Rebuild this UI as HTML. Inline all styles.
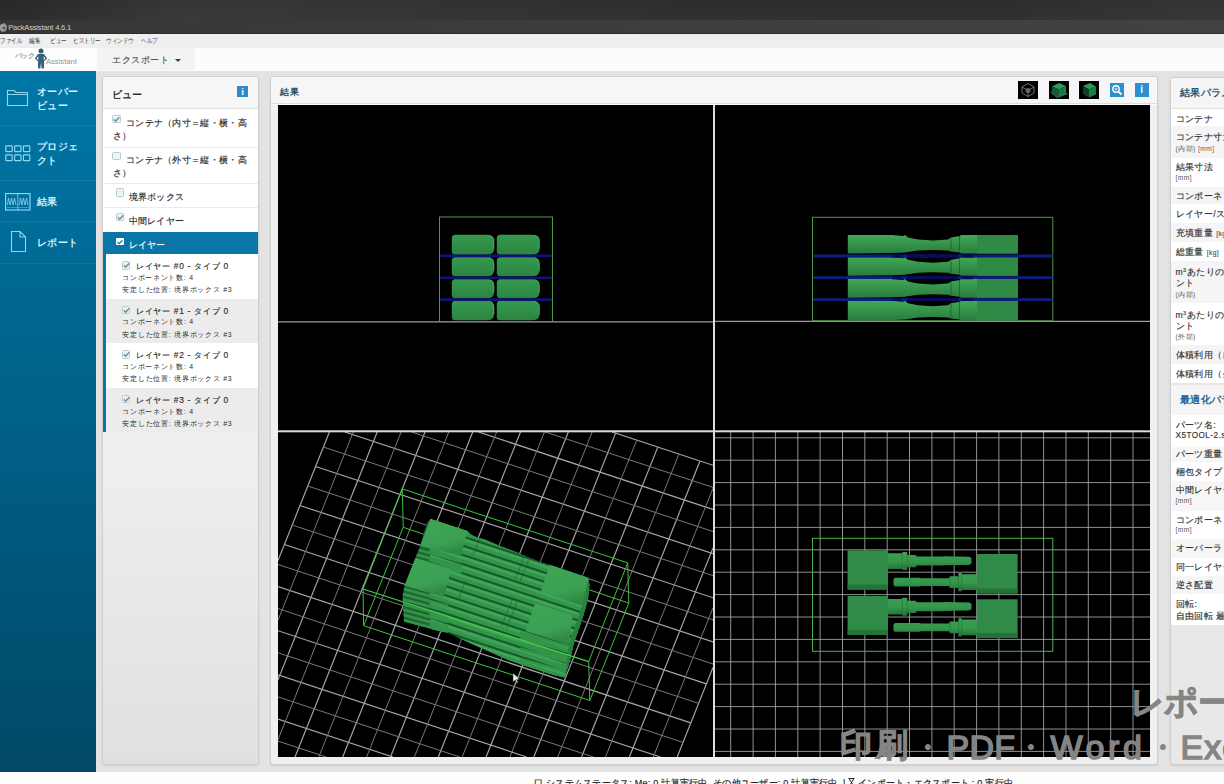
<!DOCTYPE html>
<html><head><meta charset="utf-8"><style>
*{box-sizing:border-box;margin:0;padding:0}
html,body{width:1224px;height:784px;overflow:hidden;background:#e3e3e3;font-family:"Liberation Sans",sans-serif;position:relative}
.a{position:absolute;white-space:nowrap}
.k{-webkit-text-stroke:0.15px currentColor}
.panel{position:absolute;border:1px solid #cfcfcf;border-radius:3px;box-shadow:0 1px 2px rgba(0,0,0,0.10)}
</style></head><body>
<div class="a" style="left:0px;top:0px;width:1224px;height:20px;background:linear-gradient(90deg,#2b2b2b 0%,#393a3a 15%,#363636 35%,#303030 60%,#303030 80%,#383838 100%);"></div>
<div class="a" style="left:0px;top:0px;width:1224px;height:20px;background:linear-gradient(rgba(0,0,0,.08),rgba(0,0,0,0));"></div>
<div class="a" style="left:0px;top:20px;width:1224px;height:14px;background:linear-gradient(90deg,#353636,#3c3d3c 50%,#414342);"></div>
<div class="a" style="left:0px;top:32.5px;width:1224px;height:1.5px;background:#2c2c2c;"></div>
<svg class="a" style="left:0;top:22px" width="8" height="11" viewBox="0 0 8 11"><path d="M0,3 L4,1 L7,4 L6,9 L2,10 L0,8 Z" fill="#bdbdbd" opacity=".75"/><path d="M2,6 L5,4 L5,8 Z" fill="#555"/></svg>
<div class="a" style="left:8.2px;top:23.34px;font-size:7.6px;line-height:9.12px;color:#d0d0d0;font-weight:normal;letter-spacing:-0.2px;">PackAssistant 4.6.1</div>
<div class="a" style="left:0px;top:34px;width:1224px;height:14px;background:#efefef;"></div>
<div class="a" style="left:0px;top:36.72px;font-size:6.8px;line-height:8.16px;color:#3a3a3a;font-weight:normal;letter-spacing:0px;transform:scaleX(.8);transform-origin:0 0">ファイル</div>
<div class="a" style="left:29px;top:36.72px;font-size:6.8px;line-height:8.16px;color:#3a3a3a;font-weight:normal;letter-spacing:0px;transform:scaleX(.8);transform-origin:0 0">編集</div>
<div class="a" style="left:50px;top:36.72px;font-size:6.8px;line-height:8.16px;color:#3a3a3a;font-weight:normal;letter-spacing:0px;transform:scaleX(.8);transform-origin:0 0">ビュー</div>
<div class="a" style="left:73px;top:36.72px;font-size:6.8px;line-height:8.16px;color:#3a3a3a;font-weight:normal;letter-spacing:0px;transform:scaleX(.8);transform-origin:0 0">ヒストリー</div>
<div class="a" style="left:106px;top:36.72px;font-size:6.8px;line-height:8.16px;color:#3a3a3a;font-weight:normal;letter-spacing:0px;transform:scaleX(.8);transform-origin:0 0">ウィンドウ</div>
<div class="a" style="left:141px;top:36.72px;font-size:6.8px;line-height:8.16px;color:#3a3a3a;font-weight:normal;letter-spacing:0px;transform:scaleX(.8);transform-origin:0 0">ヘルプ</div>
<div class="a" style="left:0px;top:48px;width:1224px;height:23px;background:#fcfcfc;"></div>
<div class="a" style="left:0px;top:48px;width:96px;height:23px;background:#fefefe;"></div>
<div class="a" style="left:15px;top:51.52px;font-size:6.8px;line-height:8.16px;color:#9a9a9a;font-weight:bold;letter-spacing:-0.6px;">パック</div>
<svg class="a" style="left:34px;top:48px" width="14" height="21" viewBox="0 0 14 21"><circle cx="7" cy="2.9" r="2.5" fill="#35596f"/><path d="M4,6 H10 L13.2,10.5 L10,13.2 V20.5 H7.7 L7,15 L6.3,20.5 H4 V13.2 L0.8,10.5 Z" fill="#3a6079"/><path d="M4.3,8.2 L2.6,10.5 L4.3,12 Z M9.7,8.2 L11.4,10.5 L9.7,12 Z" fill="#fff"/></svg>
<div class="a" style="left:46px;top:57.04px;font-size:7.6px;line-height:9.12px;color:#8b939a;font-weight:normal;letter-spacing:0px;">Assistant</div>
<div class="a" style="left:97px;top:48px;width:98px;height:22px;background:#f3f3f3;"></div>
<div class="a k" style="left:112px;top:54.9px;font-size:9px;line-height:10.8px;color:#555;font-weight:normal;letter-spacing:0.55px;">エクスポート</div>
<div class="a" style="left:175px;top:59px;width:0;height:0;border-left:3px solid transparent;border-right:3px solid transparent;border-top:3.5px solid #3a3a3a"></div>
<div class="a" style="left:0px;top:71px;width:96px;height:713px;background:linear-gradient(#0077a7,#004866);"></div>
<div class="a" style="left:0px;top:125px;width:96px;height:1px;background:rgba(255,255,255,0.07);"></div>
<div class="a" style="left:0px;top:180px;width:96px;height:1px;background:rgba(255,255,255,0.07);"></div>
<div class="a" style="left:0px;top:221px;width:96px;height:1px;background:rgba(255,255,255,0.07);"></div>
<div class="a" style="left:0px;top:263px;width:96px;height:1px;background:rgba(255,255,255,0.07);"></div>
<svg class="a" style="left:6px;top:89px" width="23" height="18" viewBox="0 0 23 18"><path d="M1.5,1.5 H8 L10,3.5 H21.5 V16.5 H1.5 Z M1.5,5.5 H21.5" stroke="#8fd6f5" stroke-width="1.1" fill="none"/></svg>
<svg class="a" style="left:5px;top:144.5px" width="27" height="18" viewBox="0 0 27 18"><rect x="0.8" y="0.8" width="6.4" height="5.8" rx=".6" stroke="#8fd6f5" stroke-width="1.15" fill="none"/><rect x="0.8" y="9.8" width="6.4" height="5.8" rx=".6" stroke="#8fd6f5" stroke-width="1.15" fill="none"/><rect x="9.600000000000001" y="0.8" width="6.4" height="5.8" rx=".6" stroke="#8fd6f5" stroke-width="1.15" fill="none"/><rect x="9.600000000000001" y="9.8" width="6.4" height="5.8" rx=".6" stroke="#8fd6f5" stroke-width="1.15" fill="none"/><rect x="18.400000000000002" y="0.8" width="6.4" height="5.8" rx=".6" stroke="#8fd6f5" stroke-width="1.15" fill="none"/><rect x="18.400000000000002" y="9.8" width="6.4" height="5.8" rx=".6" stroke="#8fd6f5" stroke-width="1.15" fill="none"/></svg>
<svg class="a" style="left:5px;top:192.5px" width="26" height="18" viewBox="0 0 26 18"><rect x=".6" y=".6" width="24.4" height="16.4" stroke="#8fd6f5" stroke-width="1.15" fill="none"/><path d="M12.8,1 V17" stroke="#8fd6f5" stroke-width=".8"/><path d="M2.5,12 L3.5,5 L5,12 L6.5,5 L8,12 L9.5,5 L11,12 M14.5,12 L15.5,5 L17,12 L18.5,5 L20,12 L21.5,5 L23,12" stroke="#8fd6f5" stroke-width=".8" fill="none"/><path d="M2,14.5 H24" stroke="#8fd6f5" stroke-width=".6" opacity=".7"/></svg>
<svg class="a" style="left:10px;top:230px" width="17" height="23" viewBox="0 0 17 23"><path d="M1.5,1.5 H10 L15.5,7 V21.5 H1.5 Z M10,1.5 V7 H15.5" stroke="#8fd6f5" stroke-width="1.1" fill="none"/></svg>
<div class="a" style="left:37px;top:86.24px;font-size:9.6px;line-height:11.52px;color:#d2eefa;font-weight:bold;letter-spacing:0.45px;">オーバー</div>
<div class="a" style="left:37px;top:100.24px;font-size:9.6px;line-height:11.52px;color:#d2eefa;font-weight:bold;letter-spacing:0.45px;">ビュー</div>
<div class="a" style="left:37px;top:141.24px;font-size:9.6px;line-height:11.52px;color:#d2eefa;font-weight:bold;letter-spacing:0.45px;">プロジェ</div>
<div class="a" style="left:37px;top:155.24px;font-size:9.6px;line-height:11.52px;color:#d2eefa;font-weight:bold;letter-spacing:0.45px;">クト</div>
<div class="a" style="left:37px;top:196.24px;font-size:9.6px;line-height:11.52px;color:#d2eefa;font-weight:bold;letter-spacing:0.45px;">結果</div>
<div class="a" style="left:37px;top:236.94px;font-size:9.6px;line-height:11.52px;color:#d2eefa;font-weight:bold;letter-spacing:0.45px;">レポート</div>
<div class="panel" style="left:102px;top:76px;width:157px;height:689px;background:linear-gradient(#efefef,#dddddd)"></div>
<div class="a" style="left:103px;top:77px;width:155px;height:31px;background:#f6f6f6;border-radius:2px 2px 0 0"></div>
<div class="a" style="left:103px;top:107.5px;width:155px;height:1px;background:#e2e2e2;"></div>
<div class="a" style="left:112px;top:89.12px;font-size:9.8px;line-height:11.76px;color:#2f2f2f;font-weight:bold;letter-spacing:0px;">ビュー</div>
<div class="a" style="left:237px;top:86px;width:11px;height:11px;background:#2a8ccc;"></div>
<div class="a" style="left:237px;top:85.8px;font-size:9.5px;line-height:11.4px;color:#fff;font-weight:bold;letter-spacing:0px;"><b style="display:inline-block;width:11px;text-align:center">i</b></div>
<div class="a" style="left:103px;top:108.5px;width:155px;height:38.8px;background:#fff;"></div>
<div class="a" style="left:103px;top:147.3px;width:155px;height:1px;background:#ebebeb;"></div>
<div class="a" style="left:103px;top:148.3px;width:155px;height:35px;background:#fff;"></div>
<div class="a" style="left:103px;top:183.3px;width:155px;height:1px;background:#ebebeb;"></div>
<div class="a" style="left:103px;top:184.3px;width:155px;height:22.7px;background:#fff;"></div>
<div class="a" style="left:103px;top:207px;width:155px;height:1px;background:#ebebeb;"></div>
<div class="a" style="left:103px;top:208px;width:155px;height:23.6px;background:#fff;"></div>
<div class="a" style="left:103px;top:231.6px;width:155px;height:22.6px;background:#0a76a8;"></div>
<div class="a" style="left:112.1px;top:115.1px;width:8.6px;height:8.4px;background:#eaf5f8;border:1px solid #bccbd0;border-radius:1.5px"></div>
<svg class="a" style="left:112.1px;top:115.1px" width="9" height="9" viewBox="0 0 8 8"><path d="M1.7,3.9 L3.3,5.5 L6.4,2.1" stroke="#6e909b" stroke-width="1.3" fill="none"/></svg>
<div class="a k" style="left:126px;top:118.2px;font-size:9px;line-height:10.8px;color:#2a2a2a;font-weight:normal;letter-spacing:0.3px;">コンテナ（内寸＝縦・横・高</div>
<div class="a k" style="left:113px;top:130.8px;font-size:9px;line-height:10.8px;color:#2a2a2a;font-weight:normal;letter-spacing:0.3px;">さ）</div>
<div class="a" style="left:112.1px;top:151.9px;width:8.6px;height:8.4px;background:#eaf5f8;border:1px solid #bccbd0;border-radius:1.5px"></div>
<div class="a k" style="left:126px;top:155.4px;font-size:9px;line-height:10.8px;color:#2a2a2a;font-weight:normal;letter-spacing:0.3px;">コンテナ（外寸＝縦・横・高</div>
<div class="a k" style="left:113px;top:168.2px;font-size:9px;line-height:10.8px;color:#2a2a2a;font-weight:normal;letter-spacing:0.3px;">さ）</div>
<div class="a" style="left:115.7px;top:188.4px;width:8.6px;height:8.4px;background:#eaf5f8;border:1px solid #bccbd0;border-radius:1.5px"></div>
<div class="a k" style="left:128.6px;top:192.2px;font-size:9px;line-height:10.8px;color:#2a2a2a;font-weight:normal;letter-spacing:0.3px;">境界ボックス</div>
<div class="a" style="left:115.7px;top:212.6px;width:8.6px;height:8.4px;background:#eaf5f8;border:1px solid #bccbd0;border-radius:1.5px"></div>
<svg class="a" style="left:115.7px;top:212.6px" width="9" height="9" viewBox="0 0 8 8"><path d="M1.7,3.9 L3.3,5.5 L6.4,2.1" stroke="#6e909b" stroke-width="1.3" fill="none"/></svg>
<div class="a k" style="left:128.6px;top:215.9px;font-size:9px;line-height:10.8px;color:#2a2a2a;font-weight:normal;letter-spacing:0.3px;">中間レイヤー</div>
<div class="a" style="left:116.2px;top:237.6px;width:7.5px;height:7.5px;background:#fff;border-radius:1px"></div>
<svg class="a" style="left:116.2px;top:237.6px" width="8" height="8" viewBox="0 0 8 8"><path d="M1.6,4 L3.2,5.6 L6.4,2.2" stroke="#0a76a8" stroke-width="1.3" fill="none"/></svg>
<div class="a k" style="left:128.6px;top:239.6px;font-size:9px;line-height:10.8px;color:#fff;font-weight:normal;letter-spacing:0.3px;">レイヤー</div>
<div class="a" style="left:103px;top:432px;width:155px;height:332px;background:linear-gradient(#f0f0f0,#e0e0e0);border-radius:0 0 2px 2px"></div>
<div class="a" style="left:103px;top:254.2px;width:3px;height:178px;background:#0a76a8;"></div>
<div class="a" style="left:106px;top:254.2px;width:152px;height:44.6px;background:#fff;"></div>
<div class="a" style="left:121.8px;top:261.2px;width:8.6px;height:8.4px;background:#eaf5f8;border:1px solid #bccbd0;border-radius:1.5px"></div>
<svg class="a" style="left:121.8px;top:261.2px" width="9" height="9" viewBox="0 0 8 8"><path d="M1.7,3.9 L3.3,5.5 L6.4,2.1" stroke="#6e909b" stroke-width="1.3" fill="none"/></svg>
<div class="a k" style="left:135.9px;top:260.96px;font-size:8.4px;line-height:10.08px;color:#2a2a2a;font-weight:normal;letter-spacing:0.72px;">レイヤー #0 - タイプ 0</div>
<div class="a" style="left:122.3px;top:273.86px;font-size:6.9px;line-height:8.28px;color:#2a2a2a;font-weight:normal;letter-spacing:0.7px;">コンポーネント数: 4</div>
<div class="a" style="left:122.3px;top:286.06px;font-size:6.9px;line-height:8.28px;color:#2a2a2a;font-weight:normal;letter-spacing:0.75px;">安定した位置: 境界ボックス #3</div>
<div class="a" style="left:106px;top:298.8px;width:152px;height:44.6px;background:#ececec;"></div>
<div class="a" style="left:121.8px;top:305.8px;width:8.6px;height:8.4px;background:#eaf5f8;border:1px solid #bccbd0;border-radius:1.5px"></div>
<svg class="a" style="left:121.8px;top:305.8px" width="9" height="9" viewBox="0 0 8 8"><path d="M1.7,3.9 L3.3,5.5 L6.4,2.1" stroke="#6e909b" stroke-width="1.3" fill="none"/></svg>
<div class="a k" style="left:135.9px;top:305.56px;font-size:8.4px;line-height:10.08px;color:#2a2a2a;font-weight:normal;letter-spacing:0.72px;">レイヤー #1 - タイプ 0</div>
<div class="a" style="left:122.3px;top:318.46px;font-size:6.9px;line-height:8.28px;color:#2a2a2a;font-weight:normal;letter-spacing:0.7px;">コンポーネント数: 4</div>
<div class="a" style="left:122.3px;top:330.66px;font-size:6.9px;line-height:8.28px;color:#2a2a2a;font-weight:normal;letter-spacing:0.75px;">安定した位置: 境界ボックス #3</div>
<div class="a" style="left:106px;top:343.4px;width:152px;height:44.6px;background:#fff;"></div>
<div class="a" style="left:121.8px;top:350.4px;width:8.6px;height:8.4px;background:#eaf5f8;border:1px solid #bccbd0;border-radius:1.5px"></div>
<svg class="a" style="left:121.8px;top:350.4px" width="9" height="9" viewBox="0 0 8 8"><path d="M1.7,3.9 L3.3,5.5 L6.4,2.1" stroke="#6e909b" stroke-width="1.3" fill="none"/></svg>
<div class="a k" style="left:135.9px;top:350.16px;font-size:8.4px;line-height:10.08px;color:#2a2a2a;font-weight:normal;letter-spacing:0.72px;">レイヤー #2 - タイプ 0</div>
<div class="a" style="left:122.3px;top:363.06px;font-size:6.9px;line-height:8.28px;color:#2a2a2a;font-weight:normal;letter-spacing:0.7px;">コンポーネント数: 4</div>
<div class="a" style="left:122.3px;top:375.26px;font-size:6.9px;line-height:8.28px;color:#2a2a2a;font-weight:normal;letter-spacing:0.75px;">安定した位置: 境界ボックス #3</div>
<div class="a" style="left:106px;top:388px;width:152px;height:44.6px;background:#ececec;"></div>
<div class="a" style="left:121.8px;top:395px;width:8.6px;height:8.4px;background:#eaf5f8;border:1px solid #bccbd0;border-radius:1.5px"></div>
<svg class="a" style="left:121.8px;top:395px" width="9" height="9" viewBox="0 0 8 8"><path d="M1.7,3.9 L3.3,5.5 L6.4,2.1" stroke="#6e909b" stroke-width="1.3" fill="none"/></svg>
<div class="a k" style="left:135.9px;top:394.76px;font-size:8.4px;line-height:10.08px;color:#2a2a2a;font-weight:normal;letter-spacing:0.72px;">レイヤー #3 - タイプ 0</div>
<div class="a" style="left:122.3px;top:407.66px;font-size:6.9px;line-height:8.28px;color:#2a2a2a;font-weight:normal;letter-spacing:0.7px;">コンポーネント数: 4</div>
<div class="a" style="left:122.3px;top:419.86px;font-size:6.9px;line-height:8.28px;color:#2a2a2a;font-weight:normal;letter-spacing:0.75px;">安定した位置: 境界ボックス #3</div>
<div class="panel" style="left:270px;top:76px;width:888px;height:689px;background:#f0f0f0"></div>
<div class="a" style="left:271px;top:77px;width:886px;height:26px;background:#f6f6f8;border-radius:2px 2px 0 0"></div>
<div class="a" style="left:271px;top:102.6px;width:886px;height:1px;background:#dcdcdc;"></div>
<div class="a" style="left:271px;top:103.6px;width:886px;height:1.6px;background:#fbfbfb;"></div>
<div class="a" style="left:279.5px;top:87px;font-size:9px;line-height:10.8px;color:#28505e;font-weight:bold;letter-spacing:1.3px;">結果</div>
<div class="a" style="left:1018.3px;top:81.1px;width:20px;height:17.6px;background:#000;"></div>
<svg class="a" style="left:1018px;top:81px" width="20" height="18" viewBox="0 0 20 18"><path d="M10,2.5 L16,6 V12 L10,15.5 L4,12 V6 Z M4,6 L10,9.5 L16,6 M10,9.5 V15.5" stroke="#8a8a8a" stroke-width=".8" fill="none"/><circle cx="10" cy="9.5" r="2.5" fill="#666"/></svg>
<div class="a" style="left:1049.2px;top:81.1px;width:19.6px;height:17.6px;background:#000;"></div>
<svg class="a" style="left:1049px;top:81px" width="20" height="18" viewBox="0 0 20 18"><path d="M1,11 L8,17 L19,13 L12,8 Z" fill="#777" opacity=".75"/><path d="M3,5.5 L10,2 L17,5 L10,8.5 Z" fill="#2c9c5c"/><path d="M3,5.5 L10,8.5 V16.5 L3,13.5 Z" fill="#155a31"/><path d="M10,8.5 L17,5 V13 L10,16.5 Z" fill="#1e7845"/></svg>
<div class="a" style="left:1079.2px;top:81.1px;width:20px;height:17.6px;background:#000;"></div>
<svg class="a" style="left:1079px;top:81px" width="20" height="18" viewBox="0 0 20 18"><path d="M4,5 L11,2 L17,5.5 L10,8.5 Z" fill="#2b9a58"/><path d="M4,5 L10,8.5 V16.5 L4,13 Z" fill="#123f24"/><path d="M10,8.5 L17,5.5 V13.5 L10,16.5 Z" fill="#1f7d47"/></svg>
<div class="a" style="left:1109.9px;top:83.1px;width:14.1px;height:14.3px;background:#2b8fd0;"></div>
<svg class="a" style="left:1110px;top:83px" width="14" height="14" viewBox="0 0 14 14"><circle cx="6" cy="6" r="3.2" stroke="#fff" stroke-width="1.4" fill="none"/><path d="M8.3,8.3 L11.5,11.5" stroke="#fff" stroke-width="1.8"/><path d="M6,4.5 V7.5 M4.5,6 H7.5" stroke="#fff" stroke-width=".8"/></svg>
<div class="a" style="left:1135px;top:83.1px;width:13.5px;height:14.3px;background:#2b8fd0;"></div>
<div class="a" style="left:1135px;top:84.3px;font-size:10px;line-height:12px;color:#fff;font-weight:bold;letter-spacing:0px;"><b style="display:inline-block;width:13.5px;text-align:center">i</b></div>
<div class="a" style="left:278px;top:105px;width:872px;height:652px;background:#000;"></div>
<svg class="a" style="left:0;top:0" width="1224" height="784" viewBox="0 0 1224 784"><defs><linearGradient id="gL" x1="0" y1="0" x2="0" y2="1"><stop offset="0" stop-color="#41a857"/><stop offset="1" stop-color="#2a7c3e"/></linearGradient><linearGradient id="gS" x1="0" y1="0" x2="0" y2="1"><stop offset="0" stop-color="#3aa152"/><stop offset=".55" stop-color="#34964b"/><stop offset="1" stop-color="#256f38"/></linearGradient><linearGradient id="gB" x1="0" y1="0" x2="0" y2="1"><stop offset="0" stop-color="#349a4c"/><stop offset="1" stop-color="#2c8443"/></linearGradient><clipPath id="cTL"><rect x="278" y="105" width="435" height="325"/></clipPath><clipPath id="cTR"><rect x="715" y="105" width="435" height="325"/></clipPath><clipPath id="cBL"><rect x="278" y="432" width="435" height="325"/></clipPath><clipPath id="cBR"><rect x="715" y="432" width="435" height="325"/></clipPath></defs><g clip-path="url(#cTL)"><line x1="278" y1="321.9" x2="713" y2="321.9" stroke="#9c9c9c" stroke-width="1.3"/><rect x="439.5" y="217" width="113" height="104.5" fill="none" stroke="#4f9a45" stroke-width="1"/><path d="M455.3,234.8 H487.3 Q494.3,234.8 494.3,241.8 V247.7 Q494.3,254.7 487.3,254.7 H455.3 Q451.8,254.7 451.8,251.2 V238.3 Q451.8,234.8 455.3,234.8 Z" fill="url(#gB)"/><path d="M488.3,235.4 Q493.7,235.4 493.7,240.8 V248.7" fill="none" stroke="#5cbb6f" stroke-width="1" opacity=".55"/><path d="M500.3,234.8 H532.7 Q539.7,234.8 539.7,241.8 V247.7 Q539.7,254.7 532.7,254.7 H500.3 Q496.8,254.7 496.8,251.2 V238.3 Q496.8,234.8 500.3,234.8 Z" fill="url(#gB)"/><path d="M533.7,235.4 Q539.1,235.4 539.1,240.8 V248.7" fill="none" stroke="#5cbb6f" stroke-width="1" opacity=".55"/><path d="M455.3,257.2 H487.3 Q494.3,257.2 494.3,264.2 V269.3 Q494.3,276.3 487.3,276.3 H455.3 Q451.8,276.3 451.8,272.8 V260.7 Q451.8,257.2 455.3,257.2 Z" fill="url(#gB)"/><path d="M488.3,257.8 Q493.7,257.8 493.7,263.2 V270.3" fill="none" stroke="#5cbb6f" stroke-width="1" opacity=".55"/><path d="M500.3,257.2 H532.7 Q539.7,257.2 539.7,264.2 V269.3 Q539.7,276.3 532.7,276.3 H500.3 Q496.8,276.3 496.8,272.8 V260.7 Q496.8,257.2 500.3,257.2 Z" fill="url(#gB)"/><path d="M533.7,257.8 Q539.1,257.8 539.1,263.2 V270.3" fill="none" stroke="#5cbb6f" stroke-width="1" opacity=".55"/><path d="M455.3,279.3 H487.3 Q494.3,279.3 494.3,286.3 V291.2 Q494.3,298.2 487.3,298.2 H455.3 Q451.8,298.2 451.8,294.7 V282.8 Q451.8,279.3 455.3,279.3 Z" fill="url(#gB)"/><path d="M488.3,279.9 Q493.7,279.9 493.7,285.3 V292.2" fill="none" stroke="#5cbb6f" stroke-width="1" opacity=".55"/><path d="M500.3,279.3 H532.7 Q539.7,279.3 539.7,286.3 V291.2 Q539.7,298.2 532.7,298.2 H500.3 Q496.8,298.2 496.8,294.7 V282.8 Q496.8,279.3 500.3,279.3 Z" fill="url(#gB)"/><path d="M533.7,279.9 Q539.1,279.9 539.1,285.3 V292.2" fill="none" stroke="#5cbb6f" stroke-width="1" opacity=".55"/><path d="M455.3,300.8 H487.3 Q494.3,300.8 494.3,307.8 V313.2 Q494.3,320.2 487.3,320.2 H455.3 Q451.8,320.2 451.8,316.7 V304.3 Q451.8,300.8 455.3,300.8 Z" fill="url(#gB)"/><path d="M488.3,301.4 Q493.7,301.4 493.7,306.8 V314.2" fill="none" stroke="#5cbb6f" stroke-width="1" opacity=".55"/><path d="M500.3,300.8 H532.7 Q539.7,300.8 539.7,307.8 V313.2 Q539.7,320.2 532.7,320.2 H500.3 Q496.8,320.2 496.8,316.7 V304.3 Q496.8,300.8 500.3,300.8 Z" fill="url(#gB)"/><path d="M533.7,301.4 Q539.1,301.4 539.1,306.8 V314.2" fill="none" stroke="#5cbb6f" stroke-width="1" opacity=".55"/><line x1="440" y1="255.7" x2="552" y2="255.7" stroke="#0c1574" stroke-width="2.6"/><line x1="440" y1="277.7" x2="552" y2="277.7" stroke="#0c1574" stroke-width="2.6"/><line x1="440" y1="299.6" x2="552" y2="299.6" stroke="#0c1574" stroke-width="2.6"/></g><g clip-path="url(#cTR)"><line x1="715" y1="321.4" x2="1150" y2="321.4" stroke="#9c9c9c" stroke-width="1.3"/><rect x="812.5" y="217.3" width="240.3" height="103.5" fill="none" stroke="#4f9a45" stroke-width="1"/><polygon points="847.8,235 892,235 903,236 905,235 908,237.5 918,239.5 933,240.5 948,239.5 951,237.5 960,236 961,235 977,235 1017.8,235 1017.8,253.5 977,253.5 961,253.5 959.6,252.5 951,251.5 948,250.5 933,250 918,250.5 908,252 905,252.5 892,253 847.8,253.5" fill="url(#gL)"/><rect x="977" y="235" width="40.8" height="18.5" fill="#2f8a46"/><line x1="951" y1="238" x2="951" y2="251.5" stroke="#1f5f2e" stroke-width=".8"/><line x1="959.5" y1="236" x2="959.5" y2="252.5" stroke="#1f5f2e" stroke-width=".8"/><polygon points="847.8,257.3 892,257.3 903,258.3 905,257.3 908,259.8 918,261.8 933,262.8 948,261.8 951,259.8 960,258.3 961,257.3 977,257.3 1017.8,257.3 1017.8,275.7 977,275.7 961,275.7 959.6,274.7 951,273.7 948,272.7 933,272.2 918,272.7 908,274.2 905,274.7 892,275.2 847.8,275.7" fill="url(#gL)"/><rect x="977" y="257.3" width="40.8" height="18.4" fill="#2f8a46"/><line x1="951" y1="260.3" x2="951" y2="273.7" stroke="#1f5f2e" stroke-width=".8"/><line x1="959.5" y1="258.3" x2="959.5" y2="274.7" stroke="#1f5f2e" stroke-width=".8"/><polygon points="847.8,278.9 892,278.9 903,279.9 905,278.9 908,281.4 918,283.4 933,284.4 948,283.4 951,281.4 960,279.9 961,278.9 977,278.9 1017.8,278.9 1017.8,297.8 977,297.8 961,297.8 959.6,296.8 951,295.8 948,294.8 933,294.3 918,294.8 908,296.3 905,296.8 892,297.3 847.8,297.8" fill="url(#gL)"/><rect x="977" y="278.9" width="40.8" height="18.9" fill="#2f8a46"/><line x1="951" y1="281.9" x2="951" y2="295.8" stroke="#1f5f2e" stroke-width=".8"/><line x1="959.5" y1="279.9" x2="959.5" y2="296.8" stroke="#1f5f2e" stroke-width=".8"/><polygon points="847.8,300.8 892,300.8 903,301.8 905,300.8 908,303.3 918,305.3 933,306.3 948,305.3 951,303.3 960,301.8 961,300.8 977,300.8 1017.8,300.8 1017.8,320.5 977,320.5 961,320.5 959.6,319.5 951,318.5 948,317.5 933,317 918,317.5 908,319 905,319.5 892,320 847.8,320.5" fill="url(#gL)"/><rect x="977" y="300.8" width="40.8" height="19.7" fill="#2f8a46"/><line x1="951" y1="303.8" x2="951" y2="318.5" stroke="#1f5f2e" stroke-width=".8"/><line x1="959.5" y1="301.8" x2="959.5" y2="319.5" stroke="#1f5f2e" stroke-width=".8"/><line x1="813" y1="256" x2="1052.5" y2="256" stroke="#0c1f80" stroke-width="2.8"/><path d="M892,256 H902 M907,256 H958 M962,256 H973" stroke="#0a0a5a" stroke-width="3"/><line x1="813" y1="277.7" x2="1052.5" y2="277.7" stroke="#0c1f80" stroke-width="2.8"/><path d="M892,277.7 H902 M907,277.7 H958 M962,277.7 H973" stroke="#0a0a5a" stroke-width="3"/><line x1="813" y1="299.6" x2="1052.5" y2="299.6" stroke="#0c1f80" stroke-width="2.8"/><path d="M892,299.6 H902 M907,299.6 H958 M962,299.6 H973" stroke="#0a0a5a" stroke-width="3"/></g><g clip-path="url(#cBR)"><path d="M730.7,432V757M753.1,432V757M775.4,432V757M797.8,432V757M820.1,432V757M842.5,432V757M864.8,432V757M887.2,432V757M909.5,432V757M931.9,432V757M954.2,432V757M976.6,432V757M998.9,432V757M1021.3,432V757M1043.6,432V757M1066,432V757M1088.3,432V757M1110.7,432V757M1133,432V757M715,437.8H1150M715,460.2H1150M715,482.6H1150M715,505H1150M715,527.4H1150M715,549.8H1150M715,572.2H1150M715,594.6H1150M715,617H1150M715,639.4H1150M715,661.8H1150M715,684.2H1150M715,706.6H1150M715,729H1150M715,751.4H1150" stroke="#a8a8a8" stroke-width="1" fill="none" opacity=".85"/><rect x="812.5" y="538.3" width="240.3" height="113" fill="none" stroke="#4cb34a" stroke-width="1"/><rect x="847.6" y="550.3" width="40" height="39.3" fill="#2f8b47"/><rect x="847.6" y="584.6" width="40" height="5" fill="#247339"/><rect x="847.6" y="596" width="40" height="38.8" fill="#2f8b47"/><rect x="847.6" y="629.8" width="40" height="5" fill="#247339"/><rect x="976.8" y="554" width="40.8" height="39.4" fill="#2f8b47"/><rect x="976.8" y="588.4" width="40.8" height="5" fill="#247339"/><rect x="976.8" y="599.3" width="40.8" height="38.7" fill="#2f8b47"/><rect x="976.8" y="633" width="40.8" height="5" fill="#247339"/><polygon points="887.6,553.3 902,553.3 902.5,552.1 907,552.1 907.4,555 916,555 916.4,556.6 943,556.6 944,556.3 969,556.8 971.5,558.1 971.5,563.6 969,564.9 944,565.3 943,565.6 916.4,565.6 916,567.2 907.4,567.2 907,570.1 902.5,570.1 902,568.9 887.6,568.9" fill="url(#gS)"/><path d="M902.3,552.6 V569.6 M907.2,552.6 V569.6" stroke="#1f6a33" stroke-width=".7" opacity=".7"/><polygon points="887.6,599 902,599 902.5,597.8 907,597.8 907.4,600.7 916,600.7 916.4,602.3 943,602.3 944,602 969,602.5 971.5,603.8 971.5,609.3 969,610.6 944,611 943,611.3 916.4,611.3 916,612.9 907.4,612.9 907,615.8 902.5,615.8 902,614.6 887.6,614.6" fill="url(#gS)"/><path d="M902.3,598.3 V615.3 M907.2,598.3 V615.3" stroke="#1f6a33" stroke-width=".7" opacity=".7"/><polygon points="893.5,579.1 895,577.8 920,577.8 921,578.2 948.6,578.2 950.3,576.2 958.4,576.2 958.5,572.9 961.7,572.9 961.8,574.3 976.8,574.3 976.8,589.9 961.8,589.9 961.7,591.3 958.5,591.3 958.4,588 950.3,588 948.6,586 921,586 920,586.4 895,586.4 893.5,585.1" fill="url(#gS)"/><path d="M950,576.6 V587.6 M958.4,573.3 V590.9 M961.7,573.3 V590.9" stroke="#1f6a33" stroke-width=".7" opacity=".7"/><polygon points="893.5,624.4 895,623.1 920,623.1 921,623.5 948.6,623.5 950.3,621.5 958.4,621.5 958.5,618.2 961.7,618.2 961.8,619.6 976.8,619.6 976.8,635.2 961.8,635.2 961.7,636.6 958.5,636.6 958.4,633.3 950.3,633.3 948.6,631.3 921,631.3 920,631.7 895,631.7 893.5,630.4" fill="url(#gS)"/><path d="M950,621.9 V632.9 M958.4,618.6 V636.2 M961.7,618.6 V636.2" stroke="#1f6a33" stroke-width=".7" opacity=".7"/></g><g clip-path="url(#cBL)"><path d="M329.4,432L278,560.5M377.2,432L278,679.9M425,432L295,757M472.7,432L342.7,757M520.5,432L390.5,757M568.3,432L438.3,757M615.6,433.1L486.1,757M657.8,447.1L533.8,757M700,461L581.6,757M713,548L629.4,757M713,667.4L677.2,757M612.1,432L713,465.3M478.5,432L713,509.5M344.8,432L713,553.6M315.6,466.5L713,597.8M300,505.5L713,641.9M284.4,544.5L706.4,683.9M278,586.5L690.8,722.9M278,630.7L660.4,757M278,674.8L526.7,757M278,719L393,757" stroke="#a4a4a4" stroke-width="1.2" fill="none"/><path d="M353.3,432L278,620.2M401.1,432L278,739.7M448.8,432L318.8,757M496.6,432L366.6,757M544.4,432L414.4,757M592.2,432L462.2,757M636.7,440.1L509.9,757M678.9,454.1L557.7,757M713,488.2L605.5,757M713,607.7L653.3,757M545.3,432L713,487.4M411.7,432L713,531.5M323.4,447L713,575.7M307.8,486L713,619.9M292.2,525L713,664M278,564.5L698.6,703.4M278,608.6L683,742.4M278,652.8L593.5,757M278,696.9L459.9,757M278,741.1L326.2,757" stroke="#787878" stroke-width="1" fill="none"/><line x1="402.3" y1="488.9" x2="627.7" y2="562.9" stroke="#3fc23f" stroke-width="1"/><line x1="402.3" y1="488.9" x2="363" y2="589" stroke="#3fc23f" stroke-width="1"/><line x1="402.3" y1="488.9" x2="403.2" y2="527.3" stroke="#3fc23f" stroke-width="1"/><line x1="403.2" y1="527.3" x2="628.8" y2="603.1" stroke="#3fc23f" stroke-width="1"/><line x1="403.2" y1="527.3" x2="363.6" y2="625.7" stroke="#3fc23f" stroke-width="1"/><line x1="627.7" y1="562.9" x2="628.8" y2="603.1" stroke="#3fc23f" stroke-width="1"/><line x1="628.8" y1="603.1" x2="589.8" y2="700.5" stroke="#3fc23f" stroke-width="1"/><line x1="627.7" y1="562.9" x2="588.7" y2="661.6" stroke="#3fc23f" stroke-width="1"/><line x1="363" y1="589" x2="363.6" y2="625.7" stroke="#3fc23f" stroke-width="1"/><line x1="363.6" y1="625.7" x2="589.8" y2="700.5" stroke="#3fc23f" stroke-width="1"/><line x1="588.7" y1="661.6" x2="589.8" y2="700.5" stroke="#3fc23f" stroke-width="1"/><clipPath id="cObj"><polygon points="430.5,519 467.4,531 470,534 476,537 485,539.5 500,546 516,552 530,558 545,563.5 549.6,564.8 588.4,577.7 589.5,585 588,600 582,620 574,643 570,660 565,677.5 555,675.5 529.5,667.3 507.8,660 470,643 448,632.8 440.6,631.5 404,621.7 402.6,595.7 404.5,585.8 415.4,558.1 419.1,548.9 427,523"/></clipPath><polygon points="430.5,519 467.4,531 470,534 476,537 485,539.5 500,546 516,552 530,558 545,563.5 549.6,564.8 588.4,577.7 589.5,585 588,600 582,620 574,643 570,660 565,677.5 555,675.5 529.5,667.3 507.8,660 470,643 448,632.8 440.6,631.5 404,621.7 402.6,595.7 404.5,585.8 415.4,558.1 419.1,548.9 427,523" fill="#1d6631"/><g clip-path="url(#cObj)"><path d="M430,512L600,568M430,521.2L600,577.2M430,530.4L600,586.4M430,539.6L600,595.6M430,548.8L600,604.8M430,558L600,614M430,567.2L600,623.2M430,576.4L600,632.4M430,585.6L600,641.6M430,594.8L600,650.8M430,604L600,660M430,613.2L600,669.2M430,622.4L600,678.4M430,631.6L600,687.6M430,640.8L600,696.8M430,650L600,706M430,659.2L600,715.2M430,668.4L600,724.4" stroke="#33954b" stroke-width="7" fill="none"/><path d="M430,510.2L600,566.2M430,519.4L600,575.4M430,528.6L600,584.6M430,537.8L600,593.8M430,547L600,603M430,556.2L600,612.2M430,565.4L600,621.4M430,574.6L600,630.6M430,583.8L600,639.8M430,593L600,649M430,602.2L600,658.2M430,611.4L600,667.4M430,620.6L600,676.6M430,629.8L600,685.8M430,639L600,695M430,648.2L600,704.2M430,657.4L600,713.4M430,666.6L600,722.6" stroke="#42aa58" stroke-width="2.4" fill="none" opacity=".85"/><path d="M430,516.3L600,572.3M430,525.5L600,581.5M430,534.7L600,590.7M430,543.9L600,599.9M430,553.1L600,609.1M430,562.3L600,618.3M430,571.5L600,627.5M430,580.7L600,636.7M430,589.9L600,645.9M430,599.1L600,655.1M430,608.3L600,664.3M430,617.5L600,673.5M430,626.7L600,682.7M430,635.9L600,691.9M430,645.1L600,701.1M430,654.3L600,710.3M430,663.5L600,719.5M430,672.7L600,728.7" stroke="#17552a" stroke-width="1.6" fill="none" opacity=".9"/><path d="M524,557L515.2,579M529,559L520.2,581M480,538L472.8,556M512,600L501.6,626M517,602L506.6,628M466,580L458,600" stroke="#1c6330" stroke-width="1.1" fill="none" opacity=".55"/><path d="M400,588L448,601M400,593.2L448,606.2M400,598.4L448,611.4M400,603.6L448,616.6M400,608.8L448,621.8M400,614L448,627M400,619.2L448,632.2M400,624.4L448,637.4M415,549L462,562M415,554.2L462,567.2M415,559.4L462,572.4M520,633L575,648M520,638.2L575,653.2M520,643.4L575,658.4M520,648.6L575,663.6M520,653.8L575,668.8M520,659L575,674M520,664.2L575,679.2M520,669.4L575,684.4" stroke="#34934a" stroke-width="2.8" fill="none"/><polygon points="588.4,577.7 589.5,585 588,600 582,620 574,643 570,660 565,677.5 568.6,644.8 582.3,606.1" fill="#2a8040"/></g><linearGradient id="gT" x1="0" y1="0" x2="0.3" y2="1"><stop offset="0" stop-color="#40a757"/><stop offset=".75" stop-color="#3a9f51"/><stop offset="1" stop-color="#2f8a45"/></linearGradient><polygon points="430.5,519 467.4,531 461,556 420,546" fill="url(#gT)"/><polygon points="415.4,558.1 451.1,569.5 444,597 404.5,585.8" fill="url(#gT)"/><polygon points="549.6,564.8 588.4,577.7 582.3,606.1 541,591.5" fill="url(#gT)"/><polygon points="535,603.5 572.9,615.6 568.6,644.8 525.5,631" fill="url(#gT)"/><line x1="363" y1="589" x2="588.7" y2="661.6" stroke="#44d044" stroke-width="1.2"/><path d="M513,673 l0,9 l2.2,-2 l1.6,3.2 l1.2,-.6 l-1.6,-3.1 l3,-.2 z" fill="#eee" stroke="#333" stroke-width=".5"/></g><rect x="713" y="105" width="2" height="652" fill="#dcdcdc"/><rect x="278" y="430.3" width="872" height="2" fill="#dcdcdc"/></svg>
<div class="panel" style="left:1170px;top:77px;width:70px;height:688px;background:#e8e8e8"></div>
<div class="a" style="left:1171px;top:78px;width:60px;height:30px;background:#f5f5f5;"></div>
<div class="a" style="left:1171px;top:107.5px;width:60px;height:1px;background:#e0e0e0;"></div>
<div class="a" style="left:1180px;top:87.2px;font-size:10px;line-height:12px;color:#22587c;font-weight:bold;letter-spacing:0.3px;">結果パラメータ</div>
<div class="a" style="left:1171px;top:108.5px;width:60px;height:17.5px;background:#fff;"></div>
<div class="a k" style="left:1175.5px;top:113.54px;font-size:8.6px;line-height:10.32px;color:#333;font-weight:normal;letter-spacing:0.45px;">コンテナ</div>
<div class="a" style="left:1171px;top:126px;width:60px;height:32px;background:#f5f5f5;"></div>
<div class="a k" style="left:1175.5px;top:131.84px;font-size:8.6px;line-height:10.32px;color:#333;font-weight:normal;letter-spacing:0.45px;">コンテナ寸法</div>
<div class="a" style="left:1175.5px;top:145.04px;font-size:6.6px;line-height:7.92px;color:#555;font-weight:normal;letter-spacing:0.45px;">(内部) [mm]</div>
<div class="a" style="left:1171px;top:158px;width:60px;height:29px;background:#fff;"></div>
<div class="a k" style="left:1175.5px;top:162.34px;font-size:8.6px;line-height:10.32px;color:#333;font-weight:normal;letter-spacing:0.45px;">結果寸法</div>
<div class="a" style="left:1175.5px;top:174.04px;font-size:6.6px;line-height:7.92px;color:#555;font-weight:normal;letter-spacing:0.45px;">[mm]</div>
<div class="a" style="left:1171px;top:187px;width:60px;height:17px;background:#f5f5f5;"></div>
<div class="a k" style="left:1175.5px;top:190.64px;font-size:8.6px;line-height:10.32px;color:#333;font-weight:normal;letter-spacing:0.45px;">コンポーネント</div>
<div class="a" style="left:1171px;top:204px;width:60px;height:19px;background:#fff;"></div>
<div class="a k" style="left:1175.5px;top:209.44px;font-size:8.6px;line-height:10.32px;color:#333;font-weight:normal;letter-spacing:0.45px;">レイヤー/スタック</div>
<div class="a" style="left:1171px;top:223px;width:60px;height:19px;background:#f5f5f5;"></div>
<div class="a k" style="left:1175.5px;top:227.84px;font-size:8.6px;line-height:10.32px;color:#333;font-weight:normal;letter-spacing:0.45px;">充填重量 <span style="font-size:6.6px;color:#555">[kg]</span></div>
<div class="a" style="left:1171px;top:242px;width:60px;height:18.6px;background:#fff;"></div>
<div class="a k" style="left:1175.5px;top:246.54px;font-size:8.6px;line-height:10.32px;color:#333;font-weight:normal;letter-spacing:0.45px;">総重量 <span style="font-size:6.6px;color:#555">[kg]</span></div>
<div class="a" style="left:1171px;top:260.6px;width:60px;height:42.1px;background:#f5f5f5;"></div>
<div class="a k" style="left:1175.5px;top:264.84px;font-size:8.6px;line-height:10.32px;color:#333;font-weight:normal;letter-spacing:0.45px;">m<sup style="font-size:5.5px;vertical-align:3px">3</sup>あたりのコンポーネ</div>
<div class="a k" style="left:1175.5px;top:277.84px;font-size:8.6px;line-height:10.32px;color:#333;font-weight:normal;letter-spacing:0.45px;">ント</div>
<div class="a" style="left:1175.5px;top:291.04px;font-size:6.6px;line-height:7.92px;color:#555;font-weight:normal;letter-spacing:0.45px;">(内部)</div>
<div class="a" style="left:1171px;top:302.7px;width:60px;height:42.1px;background:#fff;"></div>
<div class="a k" style="left:1175.5px;top:307.84px;font-size:8.6px;line-height:10.32px;color:#333;font-weight:normal;letter-spacing:0.45px;">m<sup style="font-size:5.5px;vertical-align:3px">3</sup>あたりのコンポーネ</div>
<div class="a k" style="left:1175.5px;top:320.54px;font-size:8.6px;line-height:10.32px;color:#333;font-weight:normal;letter-spacing:0.45px;">ント</div>
<div class="a" style="left:1175.5px;top:333.04px;font-size:6.6px;line-height:7.92px;color:#555;font-weight:normal;letter-spacing:0.45px;">(外部)</div>
<div class="a" style="left:1171px;top:344.8px;width:60px;height:19.2px;background:#f5f5f5;"></div>
<div class="a k" style="left:1175.5px;top:349.84px;font-size:8.6px;line-height:10.32px;color:#333;font-weight:normal;letter-spacing:0.45px;">体積利用（内</div>
<div class="a" style="left:1171px;top:364px;width:60px;height:19px;background:#fff;"></div>
<div class="a k" style="left:1175.5px;top:368.84px;font-size:8.6px;line-height:10.32px;color:#333;font-weight:normal;letter-spacing:0.45px;">体積利用（外</div>
<div class="a" style="left:1171px;top:383px;width:60px;height:2px;background:#e6e6e6;"></div>
<div class="a" style="left:1171px;top:385px;width:60px;height:30px;background:#f5f5f5;"></div>
<div class="a" style="left:1171px;top:414.5px;width:60px;height:1px;background:#e0e0e0;"></div>
<div class="a" style="left:1180px;top:394px;font-size:10px;line-height:12px;color:#22649a;font-weight:bold;letter-spacing:0.3px;">最適化パラメータ</div>
<div class="a" style="left:1171px;top:415px;width:60px;height:31.5px;background:#fff;"></div>
<div class="a k" style="left:1175.5px;top:419.84px;font-size:8.6px;line-height:10.32px;color:#333;font-weight:normal;letter-spacing:0.45px;">パーツ名:</div>
<div class="a k" style="left:1175.5px;top:431.08px;font-size:8.2px;line-height:9.84px;color:#333;font-weight:normal;letter-spacing:0.45px;">X5TOOL-2.stl</div>
<div class="a" style="left:1171px;top:446.5px;width:60px;height:15.5px;background:#f6f6f6;"></div>
<div class="a k" style="left:1175.5px;top:448.54px;font-size:8.6px;line-height:10.32px;color:#333;font-weight:normal;letter-spacing:0.45px;">パーツ重量</div>
<div class="a" style="left:1171px;top:462px;width:60px;height:19px;background:#fff;"></div>
<div class="a k" style="left:1175.5px;top:466.84px;font-size:8.6px;line-height:10.32px;color:#333;font-weight:normal;letter-spacing:0.45px;">梱包タイプ</div>
<div class="a" style="left:1171px;top:481px;width:60px;height:29.5px;background:#f6f6f6;"></div>
<div class="a k" style="left:1175.5px;top:485.44px;font-size:8.6px;line-height:10.32px;color:#333;font-weight:normal;letter-spacing:0.45px;">中間レイヤー</div>
<div class="a" style="left:1175.5px;top:497.04px;font-size:6.6px;line-height:7.92px;color:#555;font-weight:normal;letter-spacing:0.45px;">[mm]</div>
<div class="a" style="left:1171px;top:510.5px;width:60px;height:28.5px;background:#fff;"></div>
<div class="a k" style="left:1175.5px;top:514.84px;font-size:8.6px;line-height:10.32px;color:#333;font-weight:normal;letter-spacing:0.45px;">コンポーネント</div>
<div class="a" style="left:1175.5px;top:526.04px;font-size:6.6px;line-height:7.92px;color:#555;font-weight:normal;letter-spacing:0.45px;">[mm]</div>
<div class="a" style="left:1171px;top:539px;width:60px;height:18.6px;background:#f6f6f6;"></div>
<div class="a k" style="left:1175.5px;top:542.84px;font-size:8.6px;line-height:10.32px;color:#333;font-weight:normal;letter-spacing:0.45px;">オーバーラップ</div>
<div class="a" style="left:1171px;top:557.6px;width:60px;height:18.4px;background:#fff;"></div>
<div class="a k" style="left:1175.5px;top:561.84px;font-size:8.6px;line-height:10.32px;color:#333;font-weight:normal;letter-spacing:0.45px;">同一レイヤー</div>
<div class="a" style="left:1171px;top:576px;width:60px;height:18px;background:#f6f6f6;"></div>
<div class="a k" style="left:1175.5px;top:579.84px;font-size:8.6px;line-height:10.32px;color:#333;font-weight:normal;letter-spacing:0.45px;">逆さ配置</div>
<div class="a" style="left:1171px;top:594px;width:60px;height:31px;background:#fff;"></div>
<div class="a k" style="left:1175.5px;top:598.84px;font-size:8.6px;line-height:10.32px;color:#333;font-weight:normal;letter-spacing:0.45px;">回転:</div>
<div class="a k" style="left:1175.5px;top:610.84px;font-size:8.6px;line-height:10.32px;color:#333;font-weight:normal;letter-spacing:0.45px;">自由回転 最</div>
<div class="a" style="left:0px;top:771.5px;width:1224px;height:12.5px;background:#fdfdfd;"></div>
<div class="a k" style="left:534px;top:778px;font-size:9px;line-height:10.8px;color:#222;font-weight:normal;letter-spacing:0.25px;">口 システムステータス: Me: 0 計算実行中, その他ユーザー: 0 計算実行中 &nbsp;| <svg width="7" height="9" viewBox="0 0 7 9" style="vertical-align:-1px"><path d="M0.5,0.5 H6.5 M0.5,8.5 H6.5 M1.2,0.8 L5.8,8.2 M5.8,0.8 L1.2,8.2" stroke="#222" stroke-width="1"/></svg> インポート・エクスポート : 0 実行中</div>
<div class="a" style="left:1130.3px;top:682.4px;font-size:34px;line-height:40.8px;color:#858585;font-weight:bold;letter-spacing:-1px;-webkit-text-stroke:0.8px #858585">レポート</div>
<div class="a" style="left:839.6px;top:726px;font-size:32px;line-height:38.4px;color:#858585;font-weight:bold;letter-spacing:4px;-webkit-text-stroke:1px #858585">印刷</div>
<div class="a" style="left:912.2px;top:728.6px;font-size:31px;line-height:37.2px;color:#858585;font-weight:bold;letter-spacing:0px;-webkit-text-stroke:0px #858585">・</div>
<div class="a" style="left:1015.1px;top:728.6px;font-size:31px;line-height:37.2px;color:#858585;font-weight:bold;letter-spacing:0px;-webkit-text-stroke:0px #858585">・</div>
<div class="a" style="left:1146.6px;top:728.6px;font-size:31px;line-height:37.2px;color:#858585;font-weight:bold;letter-spacing:0px;-webkit-text-stroke:0px #858585">・</div>
<div class="a" style="left:946.5px;top:726.6px;font-size:34px;line-height:40.8px;color:#858585;font-weight:normal;letter-spacing:0.3px;-webkit-text-stroke:1.5px #858585">PDF</div>
<div class="a" style="left:1050.5px;top:726.6px;font-size:34px;line-height:40.8px;color:#858585;font-weight:normal;letter-spacing:3.6px;-webkit-text-stroke:1.5px #858585">Word</div>
<div class="a" style="left:1180.5px;top:726.6px;font-size:34px;line-height:40.8px;color:#858585;font-weight:normal;letter-spacing:1px;-webkit-text-stroke:1.5px #858585">Excel</div>
</body></html>
